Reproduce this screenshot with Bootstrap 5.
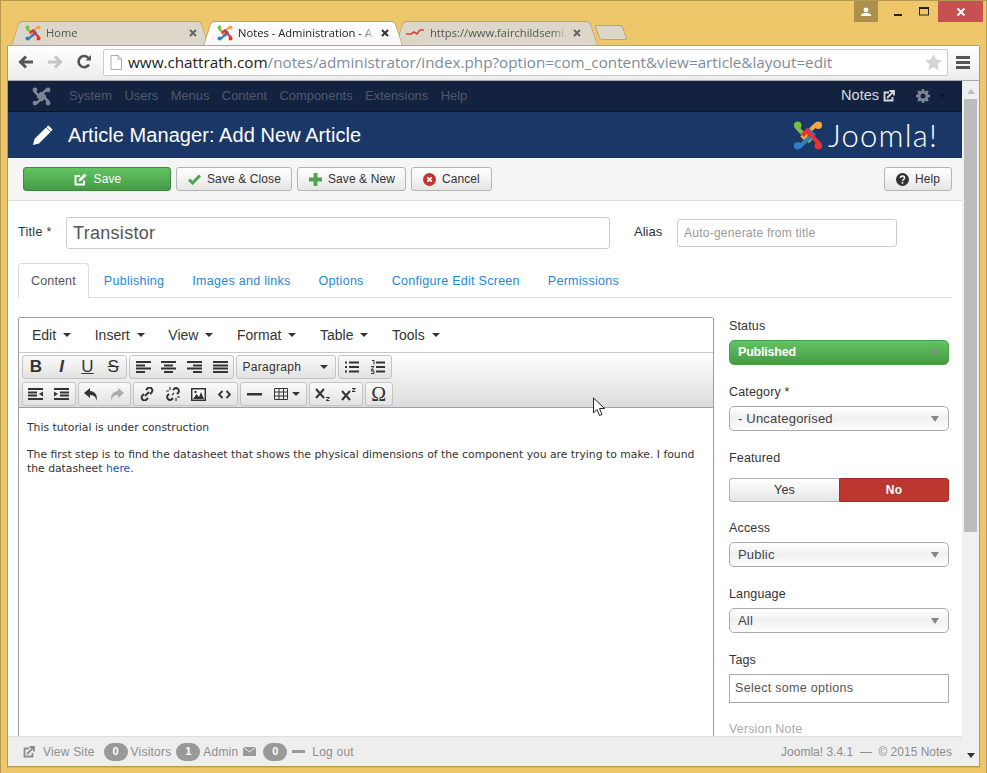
<!DOCTYPE html>
<html lang="en">
<head>
<meta charset="UTF-8">
<title>Notes - Administration - Article Manager</title>
<link rel="stylesheet" href="https://cdn.jsdelivr.net/npm/bootstrap@5.3.0/dist/css/bootstrap.min.css">
<style>
html, body { height: 100%; overflow: hidden; }
body { background: #efc76b; font-family: "Liberation Sans", Arial, sans-serif; font-size: 13px; color: #333; }
.win-frame { height: 773px; border: 1px solid #b59a4f; border-bottom: 0; display: flex; flex-direction: column; position: relative; }
.win-controls { position: absolute; top: 0; right: 3px; display: flex; height: 21px; }
.win-user { width: 24px; background: #ad904b; margin-right: 6px; display: flex; align-items: center; justify-content: center; }
.win-btn { width: 27px; display: flex; align-items: center; justify-content: center; }
.win-close { width: 45px; background: #c75050; display: flex; align-items: center; justify-content: center; }
.mouse-arrow { position: absolute; left: 591px; top: 396px; z-index: 5; }
.tab-strip { height: 44px; padding: 20px 0 0 11px; display: flex; align-items: stretch; }
.chrome-tab { width: 192px; height: 24px; position: relative; display: flex; align-items: center; padding: 0 0 0 13px; font-family: "Open Sans", sans-serif; font-size: 11.2px; color: #555; gap: 5px; z-index: 1; white-space: nowrap; }
.chrome-tab::before, .chrome-tab::after { content: ""; position: absolute; top: 0; bottom: 0; width: 55%; background: #dcd7c8; border-top: 1px solid #b3a676; z-index: -1; }
.chrome-tab::before { left: 3px; transform: skewX(-18deg); border-left: 1px solid #b3a676; border-top-left-radius: 4px; }
.chrome-tab::after { right: -1px; transform: skewX(18deg); border-right: 1px solid #b3a676; border-top-right-radius: 4px; }
.chrome-tab.is-active { color: #222; z-index: 3; }
.chrome-tab.is-active::before, .chrome-tab.is-active::after { background: linear-gradient(#fff, #f6f6f6); }
.chrome-tab.is-active::after { right: -3px; }
.chrome-tab.is-last::after { right: -6px; width: 60%; }
.tab-label { flex: 1; overflow: hidden; -webkit-mask-image: linear-gradient(to right, #000 88%, transparent); mask-image: linear-gradient(to right, #000 88%, transparent); }
.tab-x { margin-right: 7px; flex: none; }
.tab-favicon { margin: 0 1px 0 -3px; flex: none; }
.new-tab { width: 28px; height: 15px; margin: 4px 0 0 9px; position: relative; }
.new-tab::before { content: ""; position: absolute; inset: 0; background: #dcd7c8; border: 1px solid #b3a676; border-radius: 2px 3px 3px 3px; transform: skewX(20deg); }
.browser-pane { flex: 1; margin: 0 6px 6px 6px; border: 1px solid #b59a4f; border-top-color: #b3a676; border-radius: 2px 2px 0 0; background: #fff; display: flex; flex-direction: column; min-height: 0; box-shadow: 0 1px 0 #d9b45e; }
.url-bar-row { height: 35px; flex: none; background: linear-gradient(#fff, #ececec); border-bottom: 1px solid #a9a9a9; display: flex; align-items: center; padding: 0 9px 2px 10px; }
.nav-icons { display: flex; align-items: center; gap: 13px; width: 85px; }
.omnibox { flex: 1; height: 27px; background: #fff; border: 1px solid #ccc; border-radius: 2px; display: flex; align-items: center; padding: 0 5px 0 6px; font-family: "Open Sans", sans-serif; font-size: 15.25px; color: #222; white-space: nowrap; gap: 6px; }
.omnibox span.path { color: #7f8c98; }
.page-wrap { flex: 1; display: flex; min-height: 0; }
.page-main { flex: 1; min-width: 0; display: flex; flex-direction: column; }
.fake-scroll { width: 17px; background: #f0f0f0; display: flex; flex-direction: column; align-items: center; flex: none; }
.scroll-thumb { width: 13px; height: 433px; background: #bcbcbc; margin-top: 2px; }
.scroll-arrow { height: 12px; display: flex; align-items: center; margin-top: 4px; }
.admin-top { height: 31px; background: #13233f; border-bottom: 1px solid #0c1729; display: flex; align-items: center; padding: 0 16px 0 24px; flex: none; }
.admin-menu { color: #4f5a6c; font-size: 12.9px; margin: 0 0 0 18px; display: flex; gap: 12.5px; }
.admin-right { margin-left: auto; display: flex; align-items: center; color: #d5d9df; font-size: 14.5px; }
.admin-head { height: 46px; background: #1a3867; display: flex; align-items: center; padding: 0 24px; flex: none; color: #fff; }
.admin-title { font-size: 20px; margin: 0 0 0 15px; font-weight: 400; color: #fff; flex: 1; letter-spacing: .06px; }
.joomla-word { font-family: "Lato", sans-serif; font-weight: 300; font-size: 31px; line-height: 1; color: #fff; margin-left: 5px; letter-spacing: 1.2px; }
.admin-toolbar { height: 43px; background: #f5f5f5; border-bottom: 1px solid #dedede; display: flex; align-items: center; padding: 0 10px 0 15px; gap: 5px; flex: none; }
.tool-btn { height: 24px; background: linear-gradient(#fff, #e6e6e6); border: 1px solid #b3b3b3; border-radius: 3px; font-size: 12px; color: #333; padding: 0 10px 0 11px; display: flex; align-items: center; gap: 6px; letter-spacing: .1px; white-space: nowrap; }
.tool-btn.tool-wide { padding-right: 11px; }
.tool-save { width: 148px; background: linear-gradient(#62c462, #459a45); border-color: #3d8b3d; color: #fff; justify-content: center; gap: 7px; }
.edit-area { flex: 1; min-height: 0; overflow: hidden; padding: 0 10px; }
.title-row { display: flex; align-items: flex-start; padding-top: 16px; height: 62px; }
.title-lbl { width: 48px; margin: 6px 0 0 0; font-size: 12.5px; letter-spacing: .3px; }
.title-input { width: 544px; height: 32px; border: 1px solid #ccc; border-radius: 3px; padding: 0 6px; font-size: 18px; color: #555; display: flex; align-items: center; letter-spacing: .3px; }
.alias-lbl { margin: 5px 0 0 24px; width: 43px; }
.alias-input { width: 220px; height: 28px; margin-top: 2px; border: 1px solid #ccc; border-radius: 3px; padding: 0 6px; color: #999; font-size: 12px; display: flex; align-items: center; letter-spacing: .25px; }
.admin-tabs { --bs-nav-tabs-border-color: #ddd; --bs-nav-tabs-border-radius: 4px; margin-bottom: 19px; height: 35px; font-size: 12.5px; }
.admin-tabs .nav-link { color: #1e88d6; padding: 8px 12px; height: 35px; margin-right: 2px; letter-spacing: .28px; border-bottom: 0; }
.admin-tabs .nav-link.active { color: #555; border-color: #ddd #ddd #fff; letter-spacing: .15px; }
.edit-cols { display: flex; gap: 15px; align-items: flex-start; }
.editor-box { width: 696px; height: 500px; border: 1px solid #9e9e9e; border-radius: 2px 2px 0 0; flex: none; overflow: hidden; }
.mce-menu { height: 35px; display: flex; align-items: center; gap: 23.6px; padding-left: 13px; font-size: 14px; color: #333; border-bottom: 1px solid #c8c8c8; background: #fff; }
.mce-menu span::after { content: ""; display: inline-block; border: 4px solid transparent; border-top-color: #333; border-bottom: 0; margin-left: 7px; vertical-align: 3px; }
.mce-bars { height: 55px; background: linear-gradient(#fff, #dcdcdc); border-bottom: 1px solid #9e9e9e; padding: 2px 3px 0; display: flex; flex-direction: column; gap: 3px; }
.mce-row { display: flex; gap: 2px; height: 24px; }
.mce-grp { display: flex; border: 1px solid #c4c4c4; border-radius: 3px; height: 24px; background: linear-gradient(#fafafa, #e2e2e2); }
.mce-i { width: 25.8px; display: flex; align-items: center; justify-content: center; color: #333; font-size: 17px; }
.mce-sel { width: 98px; display: flex; align-items: center; justify-content: space-between; padding: 0 7px 0 5px; font-size: 12px; color: #333; letter-spacing: .3px; }
.mce-caret { border: 4px solid transparent; border-top-color: #333; border-bottom: 0; display: inline-block; }
.mce-tbl { width: 39px; gap: 4px; }
.mce-omega { font-family: "Liberation Serif", serif; font-size: 20px; }
.editor-body { padding: 13px 8px; font-family: "DejaVu Sans", Verdana, sans-serif; font-size: 10.8px; line-height: 14px; color: #333; }
.editor-body p { margin: 0 0 13px; }
.editor-body a { color: #1b57b1; text-decoration: none; }
.side-col { width: 220px; flex: none; font-size: 12.5px; letter-spacing: .15px; margin-top: 2px; }
.side-lbl { margin-bottom: 7px; height: 14px; line-height: 14px; color: #333; }
.side-field { margin-bottom: 20px; }
.side-featured { margin-bottom: 19px; }
.side-featured .side-lbl { margin-bottom: 13px; }
.side-tags { margin-bottom: 19px; }
.ver-note { color: #aaa; }
.pick { height: 25px; border: 1px solid #aaa; border-radius: 5px; background: linear-gradient(#fff, #f0f0f0 50%, #fff); display: flex; align-items: center; justify-content: space-between; padding: 0 9px 0 8px; font-size: 13px; letter-spacing: .2px; color: #444; }
.pick::after { content: ""; border: 4px solid transparent; border-top: 6px solid #888; border-bottom: 0; }
.pick-green { background: linear-gradient(#62c462, #459a45); border-color: #4b9f4b; color: #fff; font-weight: 700; font-size: 12.5px; letter-spacing: -.2px; }
.yes-no { display: flex; height: 24px; text-align: center; }
.yes-no div { width: 50%; line-height: 22px; }
.yes-part { border: 1px solid #b3b3b3; border-right: 0; border-radius: 3px 0 0 3px; background: linear-gradient(#fff, #e6e6e6); }
.no-part { background: #bd362f; color: #fff; border: 1px solid #a82d27; border-radius: 0 3px 3px 0; font-weight: 700; font-size: 12px; }
.tags-box { height: 29px; border: 1px solid #aaa; padding: 0 5px; display: flex; align-items: center; color: #555; letter-spacing: .3px; }
.admin-foot { height: 30px; background: #eee; border-top: 1px solid #ddd; display: flex; align-items: center; padding: 0 10px 0 15px; color: #8d8d8d; font-size: 12px; flex: none; letter-spacing: .2px; white-space: nowrap; }
.foot-pill { background: #999; color: #fff; font-weight: 700; border-radius: 10px; width: 24px; height: 18px; display: inline-flex; align-items: center; justify-content: center; font-size: 11px; margin-right: 3px; }
.foot-gap { margin-right: 5px; }
.foot-view { margin-right: 9px; }
.foot-mail { margin-right: 7px; }
.foot-dash { width: 13px; height: 3px; background: #999; margin-right: 7px; }
.foot-right { margin-left: auto; letter-spacing: 0; }
.arrow-up { border: 4px solid transparent; border-bottom: 5px solid #bbb; border-top: 0; }
.arrow-down { display: block; border: 4px solid transparent; border-top: 5px solid #333; border-bottom: 0; }
.gear-icon { margin-left: 21px; }
.gear-caret { width: 0; border: 4px solid transparent; border-top-color: #0c1729; border-bottom: 0; }
</style>
</head>
<body>
<div class="win-frame">
    <div class="win-controls">
        <div class="win-user"><svg width="10" height="9" viewBox="0 0 10 9"><circle cx="5" cy="3" r="2.4" fill="#fff"/><path d="M0 9V7.5L3 6h4l3 1.5V9z" fill="#fff"/></svg></div>
        <div class="win-btn"><svg width="10" height="10" viewBox="0 0 10 10"><rect x="1" y="7" width="8" height="2" fill="#222"/></svg></div>
        <div class="win-btn"><svg width="11" height="9" viewBox="0 0 11 9"><rect x=".5" y="1" width="9" height="7" fill="none" stroke="#222"/><rect x="0" y="0" width="10" height="2" fill="#222"/></svg></div>
        <div class="win-close"><svg width="10" height="10" viewBox="0 0 10 10"><path d="M1.5 1.5l7 7m0-7l-7 7" stroke="#fff" stroke-width="1.8"/></svg></div>
    </div>
    <svg class="mouse-arrow" width="14" height="20" viewBox="0 0 14 20"><path d="M1.500 1v15l3.500-3.500 2.500 6 2.500-1-2.500-6h5z" fill="#fff" stroke="#222"/></svg>
    <div class="tab-strip">
        <div class="chrome-tab">
            <svg width="16" height="16" viewBox="0 0 32 32" class="flex-none"><use href="#jlogo"/></svg>
            <span class="tab-label">Home</span>
            <svg class="tab-x" width="8" height="8" viewBox="0 0 8 8"><path d="M1 1l6 6m0-6L1 7" stroke="#666" stroke-width="2"/></svg>
        </div>
        <div class="chrome-tab is-active">
            <svg width="16" height="16" viewBox="0 0 32 32" class="flex-none"><use href="#jlogo"/></svg>
            <span class="tab-label">Notes - Administration - A</span>
            <svg class="tab-x" width="8" height="8" viewBox="0 0 8 8"><path d="M1 1l6 6m0-6L1 7" stroke="#333" stroke-width="2"/></svg>
        </div>
        <div class="chrome-tab is-last">
            <svg class="tab-favicon" width="18" height="12" viewBox="0 0 18 12"><path d="M0 7h5l3-2 3 2 3-4h4" fill="none" stroke="#d0463c" stroke-width="1.600"/></svg>
            <span class="tab-label">https://www.fairchildsemi.</span>
            <svg class="tab-x" width="8" height="8" viewBox="0 0 8 8"><path d="M1 1l6 6m0-6L1 7" stroke="#666" stroke-width="2"/></svg>
        </div>
        <div class="new-tab"></div>
    </div>
    <div class="browser-pane">
        <div class="url-bar-row">
            <div class="nav-icons">
                <svg width="16" height="14" viewBox="0 0 16 14"><path d="M15 7H4M8 1.5L2.5 7 8 12.5" fill="none" stroke="#555" stroke-width="3"/></svg>
                <svg width="16" height="14" viewBox="0 0 16 14"><path d="M1 7h11M8 1.5L13.5 7 8 12.5" fill="none" stroke="#c4c4c4" stroke-width="3"/></svg>
                <svg width="16" height="16" viewBox="0 0 16 16"><path d="M13 10.5A5.6 5.6 0 1 1 12.5 4" fill="none" stroke="#555" stroke-width="2.6"/><path d="M9.5 6.5H15V1z" fill="#555"/></svg>
            </div>
            <div class="omnibox">
                <svg width="12" height="15" viewBox="0 0 12 15" class="flex-none"><path d="M1 .5h7l3.500 3.500v10.500H1z" fill="#fff" stroke="#aaa"/><path d="M8 .5V4h3.500" fill="#eee" stroke="#aaa"/></svg>
                <span>www.chattrath.com<span class="path">/notes/administrator/index.php?option=com_content&amp;view=article&amp;layout=edit</span></span>
                <svg class="ms-auto flex-none" width="17" height="16" viewBox="0 0 17 16"><path d="M8.500 0l2.600 5.400 5.900.8-4.300 4.100 1 5.700-5.200-2.800-5.200 2.800 1-5.700L0 6.200l5.900-.8z" fill="#d4d4d4"/></svg>
            </div>
            <svg class="ms-2 flex-none" width="14" height="13" viewBox="0 0 14 13"><path d="M0 0h14v3H0zM0 5h14v3H0zM0 10h14v3H0z" fill="#555"/></svg>
        </div>
        <div class="page-wrap">
            <div class="page-main">
                <div class="admin-top">
                    <svg width="19" height="19" viewBox="0 0 32 32"><use href="#jmono"/></svg>
                    <div class="admin-menu"><span>System</span><span>Users</span><span>Menus</span><span>Content</span><span>Components</span><span>Extensions</span><span>Help</span></div>
                    <div class="admin-right">
                        <span>Notes</span>
                        <svg class="ms-1" width="12" height="12" viewBox="0 0 12 12"><path d="M9.500 7v3.500h-8v-8H6" fill="none" stroke="#d5d9df" stroke-width="1.800"/><path d="M4 8l6-6M6.500 1H11v4.500" fill="none" stroke="#d5d9df" stroke-width="1.800"/></svg>
                        <svg class="gear-icon" width="14" height="14" viewBox="0 0 14 14"><circle cx="7" cy="7" r="4" fill="none" stroke="#7c8697" stroke-width="3"/><path d="M7 0v3M7 11v3M0 7h3M11 7h3M2 2l2 2M10 10l2 2M12 2l-2 2M4 10l-2 2" stroke="#7c8697" stroke-width="2.400"/></svg>
                        <span class="ms-2 gear-caret"></span>
                    </div>
                </div>
                <div class="admin-head">
                    <svg width="21" height="21" viewBox="0 0 21 21"><path d="M1 20l1.500-6L14 2.500 18.500 7 7 18.500z" fill="#fff"/><path d="M15.500 1l1-.6 4 4-.6 1.200-1 1-4.400-4.400z" fill="#fff"/></svg>
                    <h1 class="admin-title">Article Manager: Add New Article</h1>
                    <svg width="30" height="31" viewBox="0 0 32 32"><use href="#jlogo"/></svg>
                    <span class="joomla-word">Joomla!</span>
                </div>
                <div class="admin-toolbar">
                    <div class="tool-btn tool-save"><svg width="13" height="13" viewBox="0 0 13 13"><path d="M10 7.500v4H1.500V3H6" fill="none" stroke="#fff" stroke-width="2"/><path d="M4.500 8.500l.5-2.500L10.500 .5l2 2L7 8z" fill="#fff"/></svg>Save</div>
                    <div class="tool-btn"><svg width="13" height="11" viewBox="0 0 13 11"><path d="M1 5.500l3.500 3.500L12 1.500" fill="none" stroke="#51a351" stroke-width="3"/></svg>Save &amp; Close</div>
                    <div class="tool-btn"><svg width="13" height="13" viewBox="0 0 13 13"><path d="M6.500 0v13M0 6.500h13" stroke="#51a351" stroke-width="3.800"/></svg>Save &amp; New</div>
                    <div class="tool-btn tool-wide"><svg width="13" height="13" viewBox="0 0 13 13"><circle cx="6.500" cy="6.500" r="6.500" fill="#bd362f"/><path d="M4.300 4.300l4.400 4.400m0-4.400l-4.400 4.400" stroke="#fff" stroke-width="1.800"/></svg>Cancel</div>
                    <div class="tool-btn tool-wide ms-auto"><svg width="13" height="13" viewBox="0 0 13 13"><circle cx="6.500" cy="6.500" r="6.500" fill="#333"/><path d="M4.500 5c0-2.600 4-2.600 4 0 0 1.500-2 1.500-2 3" fill="none" stroke="#fff" stroke-width="1.500"/><rect x="5.700" y="9" width="1.600" height="1.600" fill="#fff"/></svg>Help</div>
                </div>
                <div class="edit-area">
                    <div class="title-row">
                        <div class="title-lbl">Title *</div>
                        <div class="title-input">Transistor</div>
                        <div class="alias-lbl">Alias</div>
                        <div class="alias-input">Auto-generate from title</div>
                    </div>
                    <ul class="nav nav-tabs admin-tabs">
                        <li class="nav-item"><a class="nav-link active" href="#">Content</a></li>
                        <li class="nav-item"><a class="nav-link" href="#">Publishing</a></li>
                        <li class="nav-item"><a class="nav-link" href="#">Images and links</a></li>
                        <li class="nav-item"><a class="nav-link" href="#">Options</a></li>
                        <li class="nav-item"><a class="nav-link" href="#">Configure Edit Screen</a></li>
                        <li class="nav-item"><a class="nav-link" href="#">Permissions</a></li>
                    </ul>
                    <div class="edit-cols">
                        <div class="editor-box">
                            <div class="mce-menu"><span>Edit</span><span>Insert</span><span>View</span><span>Format</span><span>Table</span><span>Tools</span></div>
                            <div class="mce-bars">
                                <div class="mce-row">
                                    <div class="mce-grp">
                                        <div class="mce-i fw-bold">B</div><div class="mce-i fst-italic fw-bold">I</div><div class="mce-i text-decoration-underline">U</div><div class="mce-i text-decoration-line-through">S</div>
                                    </div>
                                    <div class="mce-grp">
                                        <div class="mce-i"><svg width="15" height="12" viewBox="0 0 15 12"><path d="M0 1h15M0 4.400h9M0 7.600h15M0 11h9" stroke="#333" stroke-width="2"/></svg></div>
                                        <div class="mce-i"><svg width="15" height="12" viewBox="0 0 15 12"><path d="M0 1h15M3 4.400h9M0 7.600h15M3 11h9" stroke="#333" stroke-width="2"/></svg></div>
                                        <div class="mce-i"><svg width="15" height="12" viewBox="0 0 15 12"><path d="M0 1h15M6 4.400h9M0 7.600h15M6 11h9" stroke="#333" stroke-width="2"/></svg></div>
                                        <div class="mce-i"><svg width="15" height="12" viewBox="0 0 15 12"><path d="M0 1h15M0 4.400h15M0 7.600h15M0 11h15" stroke="#333" stroke-width="2"/></svg></div>
                                    </div>
                                    <div class="mce-grp"><div class="mce-sel">Paragraph <span class="mce-caret"></span></div></div>
                                    <div class="mce-grp">
                                        <div class="mce-i"><svg width="14" height="12" viewBox="0 0 14 12"><path d="M4 1.500h10M4 6h10M4 10.500h10" stroke="#333" stroke-width="2"/><path d="M0 1.500h2M0 6h2M0 10.500h2" stroke="#333" stroke-width="2"/></svg></div>
                                        <div class="mce-i"><svg width="14" height="14" viewBox="0 0 14 14"><path d="M5 2.500h9M5 7h9M5 11.500h9" stroke="#333" stroke-width="2"/><path d="M1 .5h2v4M0 6.500h3L0 10h3M0 11h3v2.500H0" fill="none" stroke="#333"/></svg></div>
                                    </div>
                                </div>
                                <div class="mce-row">
                                    <div class="mce-grp">
                                        <div class="mce-i"><svg width="15" height="12" viewBox="0 0 15 12"><path d="M0 1h15M0 4.400h9M0 7.600h9M0 11h15" stroke="#333" stroke-width="2"/><path d="M15 3.500v5L11 6z" fill="#333"/></svg></div>
                                        <div class="mce-i"><svg width="15" height="12" viewBox="0 0 15 12"><path d="M0 1h15M6 4.400h9M6 7.600h9M0 11h15" stroke="#333" stroke-width="2"/><path d="M0 3.500v5L4 6z" fill="#333"/></svg></div>
                                    </div>
                                    <div class="mce-grp">
                                        <div class="mce-i"><svg width="14" height="13" viewBox="0 0 14 13"><path d="M6 0L0 5l6 5V7c4 0 6 2 6.500 6C14 7 11 3.500 6 3z" fill="#333"/></svg></div>
                                        <div class="mce-i"><svg width="14" height="13" viewBox="0 0 14 13"><path d="M8 0l6 5-6 5V7c-4 0-6 2-6.500 6C0 7 3 3.500 8 3z" fill="#aaa"/></svg></div>
                                    </div>
                                    <div class="mce-grp">
                                        <div class="mce-i"><svg width="14" height="14" viewBox="0 0 14 14"><g fill="none" stroke="#333" stroke-width="2"><path d="M6 3l1.500-1.500a2.700 2.700 0 0 1 4 0 2.700 2.700 0 0 1 0 4L10 7M8 11l-1.500 1.500a2.700 2.700 0 0 1-4 0 2.700 2.700 0 0 1 0-4L4 7"/><path d="M5 9l4-4"/></g></svg></div>
                                        <div class="mce-i"><svg width="14" height="14" viewBox="0 0 14 14"><g fill="none" stroke="#333" stroke-width="2"><path d="M7 3l1-1a2.700 2.700 0 0 1 4 0 2.700 2.700 0 0 1 0 4l-1 1M7 11l-1 1a2.700 2.700 0 0 1-4 0 2.700 2.700 0 0 1 0-4l1-1"/><path d="M4 0v3M0 4h3M10 14v-3M14 10h-3M6 8l2-2" stroke-width="1.200"/></g></svg></div>
                                        <div class="mce-i"><svg width="15" height="13" viewBox="0 0 15 13"><rect width="15" height="13" fill="#333"/><rect x="1.500" y="1.500" width="12" height="10" fill="#fff"/><path d="M2 11l3.500-5 2.500 3 2-5 3 7z" fill="#333"/><circle cx="4.500" cy="4" r="1.200" fill="#333"/></svg></div>
                                        <div class="mce-i"><svg width="13" height="9" viewBox="0 0 13 9"><path d="M4.500 1L1 4.500 4.500 8M8.500 1L12 4.500 8.500 8" fill="none" stroke="#333" stroke-width="1.800"/></svg></div>
                                    </div>
                                    <div class="mce-grp">
                                        <div class="mce-i"><svg width="15" height="3" viewBox="0 0 15 3"><rect width="15" height="2.500" fill="#333"/></svg></div>
                                        <div class="mce-i mce-tbl"><svg width="14" height="12" viewBox="0 0 14 12"><path d="M.5.500h13v11H.5zM.5 4h13M.5 8h13M5 .5v11M9.500.5v11" fill="none" stroke="#333"/></svg><span class="mce-caret"></span></div>
                                    </div>
                                    <div class="mce-grp">
                                        <div class="mce-i"><svg width="16" height="13" viewBox="0 0 16 13"><path d="M1 1l8 9M9 1l-8 9" stroke="#333" stroke-width="2"/><path d="M11 9.500h3.500L11 12.500h3.500" fill="none" stroke="#333"/></svg></div>
                                        <div class="mce-i"><svg width="16" height="13" viewBox="0 0 16 13"><path d="M1 3l8 9M9 3l-8 9" stroke="#333" stroke-width="2"/><path d="M11 .5h3.500L11 3.500h3.500" fill="none" stroke="#333"/></svg></div>
                                    </div>
                                    <div class="mce-grp"><div class="mce-i mce-omega">Ω</div></div>
                                </div>
                            </div>
                            <div class="editor-body">
                                <p>This tutorial is under construction</p>
                                <p>The first step is to find the datasheet that shows the physical dimensions of the component you are trying to make. I found the datasheet <a href="#">here</a>.</p>
                            </div>
                        </div>
                        <div class="side-col">
                            <div class="side-field"><div class="side-lbl">Status</div><div class="pick pick-green">Published</div></div>
                            <div class="side-field"><div class="side-lbl">Category *</div><div class="pick">- Uncategorised</div></div>
                            <div class="side-featured"><div class="side-lbl">Featured</div><div class="yes-no"><div class="yes-part">Yes</div><div class="no-part">No</div></div></div>
                            <div class="side-field"><div class="side-lbl">Access</div><div class="pick">Public</div></div>
                            <div class="side-field"><div class="side-lbl">Language</div><div class="pick">All</div></div>
                            <div class="side-tags"><div class="side-lbl">Tags</div><div class="tags-box">Select some options</div></div>
                            <div class="side-lbl ver-note">Version Note</div>
                        </div>
                    </div>
                </div>
                <div class="admin-foot">
                    <svg class="me-2" width="12" height="12" viewBox="0 0 12 12"><path d="M9.500 7v3.500h-8v-8H6" fill="none" stroke="#8d8d8d" stroke-width="1.800"/><path d="M4 8l6-6M6.500 1H11v4.500" fill="none" stroke="#8d8d8d" stroke-width="1.800"/></svg>
                    <span class="foot-view">View Site</span>
                    <span class="foot-pill">0</span><span class="foot-gap">Visitors</span>
                    <span class="foot-pill">1</span><span class="foot-gap">Admin</span>
                    <svg class="foot-mail" width="13" height="9" viewBox="0 0 13 9"><rect width="13" height="9" fill="#999"/><path d="M0 0l6.500 5L13 0" fill="none" stroke="#eee"/></svg>
                    <span class="foot-pill foot-gap">0</span>
                    <span class="foot-dash"></span>
                    <span>Log out</span>
                    <span class="foot-right">Joomla! 3.4.1 &nbsp;—&nbsp; © 2015 Notes</span>
                </div>
            </div>
            <div class="fake-scroll">
                <div class="scroll-arrow"><span class="arrow-up"></span></div>
                <div class="scroll-thumb"></div>
                <div class="mt-auto mb-2"><span class="arrow-down"></span></div>
            </div>
        </div>
    </div>
</div>
<svg width="0" height="0" class="position-absolute">
    <defs>
        <g id="jlogo" fill="none" stroke-width="4.500">
            <path d="M4 7l13 14 5-5" stroke="#7ac143"/>
            <circle cx="5" cy="5" r="4" fill="#7ac143"/>
            <path d="M25 4L11 17l5 5" stroke="#f9a541"/>
            <circle cx="27" cy="5" r="4" fill="#f9a541"/>
            <path d="M7 28l14-13-5-5" stroke="#2c7fc0"/>
            <circle cx="5" cy="27" r="4" fill="#2c7fc0"/>
            <path d="M28 25L15 11l-5 5" stroke="#e8303a"/>
            <circle cx="27" cy="27" r="4" fill="#e8303a"/>
        </g>
        <g id="jmono" fill="none" stroke="#7c8697" stroke-width="4.500">
            <path d="M4 7l13 14 5-5M25 4L11 17l5 5M7 28l14-13-5-5M28 25L15 11l-5 5"/>
            <g fill="#7c8697" stroke="none"><circle cx="5" cy="5" r="4"/><circle cx="27" cy="5" r="4"/><circle cx="5" cy="27" r="4"/><circle cx="27" cy="27" r="4"/></g>
        </g>
    </defs>
</svg>
<script src="https://cdn.jsdelivr.net/npm/bootstrap@5.3.0/dist/js/bootstrap.bundle.min.js"></script>
</body>
</html>
